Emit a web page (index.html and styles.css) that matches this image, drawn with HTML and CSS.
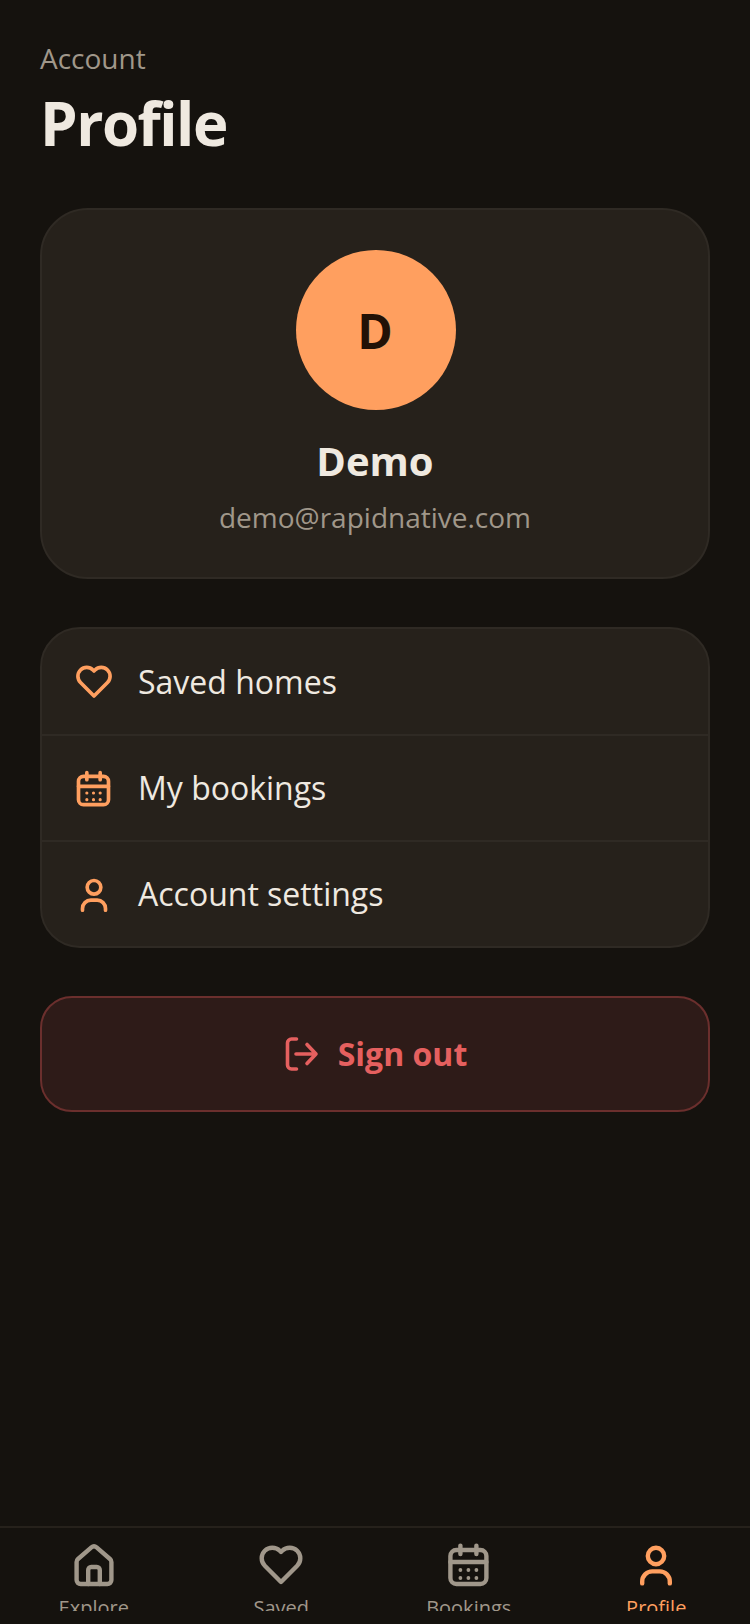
FILE: index.html
```html
<!DOCTYPE html>
<html lang="en">

<head>
    <meta charset="UTF-8">
    <meta name="viewport" content="width=device-width, initial-scale=1.0">
    <title>Profile</title>
    <link rel="stylesheet" href="styles.css">
</head>

<body>
<div class="screen">
    <main class="content">
        <p class="eyebrow">Account</p>
        <h1>Profile</h1>

        <!-- User card -->
        <section class="user-card">
            <div class="avatar">D</div>
            <div class="user-name">Demo</div>
            <div class="user-email">demo@rapidnative.com</div>
        </section>

        <!-- Menu -->
        <section class="menu">
            <div class="menu-row">
                <svg class="menu-icon" viewBox="0 0 24 24"><path d="M12 21 3.9 12.9a5.3 5.3 0 0 1 0-7.5 5.3 5.3 0 0 1 7.5 0l.6.6.6-.6a5.3 5.3 0 0 1 7.5 0 5.3 5.3 0 0 1 0 7.5z"/></svg>
                <span>Saved homes</span>
            </div>
            <div class="menu-row">
                <svg class="menu-icon" viewBox="0 0 24 24"><rect x="2.7" y="5" width="18" height="17" rx="3"/><path d="M7.7 2.8v4.2M15.7 2.8v4.2M2.7 11h18"/><path class="dots" d="M7.7 15h.01M11.7 15h.01M15.7 15h.01M7.7 19h.01M11.7 19h.01M15.7 19h.01"/></svg>
                <span>My bookings</span>
            </div>
            <div class="menu-row">
                <svg class="menu-icon" viewBox="0 0 24 24"><circle cx="12" cy="8" r="4.1"/><path d="M5.1 21.7v-1a5 5 0 0 1 5-5h3.8a5 5 0 0 1 5 5v1"/></svg>
                <span>Account settings</span>
            </div>
        </section>

        <div class="sign-out">
            <svg class="sign-out-icon" viewBox="0 0 36 36"><path d="M13.5 3h-5a4 4 0 0 0-4 4v22a4 4 0 0 0 4 4h5M13 18h20M24 8.5l9 9.5-9 9.5"/></svg>
            <span>Sign out</span>
        </div>
    </main>

    <!-- Bottom tabs -->
    <nav class="tabs">
        <div class="tab">
            <svg class="tab-icon" viewBox="0 0 24 24"><path d="M3.3 11a2 2 0 0 1 .7-1.5l6.7-5.8a2 2 0 0 1 2.6 0L20 9.5a2 2 0 0 1 .7 1.5v9a2 2 0 0 1-2 2H5.3a2 2 0 0 1-2-2z"/><path d="M9.1 22v-7a1.5 1.5 0 0 1 1.5-1.5h2.8a1.5 1.5 0 0 1 1.5 1.5v7"/></svg>
            <span>Explore</span>
        </div>
        <div class="tab">
            <svg class="tab-icon" viewBox="0 0 24 24"><path d="M12 21 3.9 12.9a5.3 5.3 0 0 1 0-7.5 5.3 5.3 0 0 1 7.5 0l.6.6.6-.6a5.3 5.3 0 0 1 7.5 0 5.3 5.3 0 0 1 0 7.5z"/></svg>
            <span>Saved</span>
        </div>
        <div class="tab">
            <svg class="tab-icon" viewBox="0 0 24 24"><rect x="2.7" y="5" width="18" height="17" rx="3"/><path d="M7.7 2.8v4.2M15.7 2.8v4.2M2.7 11h18"/><path class="dots" d="M7.7 15h.01M11.7 15h.01M15.7 15h.01M7.7 19h.01M11.7 19h.01M15.7 19h.01"/></svg>
            <span>Bookings</span>
        </div>
        <div class="tab tab-active">
            <svg class="tab-icon" viewBox="0 0 24 24"><circle cx="12" cy="8" r="4.1"/><path d="M5.1 21.7v-1a5 5 0 0 1 5-5h3.8a5 5 0 0 1 5 5v1"/></svg>
            <span>Profile</span>
        </div>
    </nav>
</div>
</body>

</html>
```

FILE: styles.css
```css
body {
    font-family: 'Open Sans', sans-serif;
    background-color: #15120e;
    margin: 0;
    padding: 0;
    color: #efe9e0;
}

svg {
    fill: none;
    stroke: currentColor;
    stroke-width: 2.2;
    stroke-linecap: round;
    stroke-linejoin: round;
    flex-shrink: 0;
}

.dots {
    stroke-width: 1.9;
}

.screen {
    height: 1624px;
    display: flex;
    flex-direction: column;
    overflow: hidden;
}

.content {
    flex: 1;
    padding: 38px 40px 0;
}

.eyebrow {
    margin: 0;
    font-size: 28px;
    line-height: 40px;
    color: #a0978a;
}

h1 {
    margin: 5px 0 0;
    font-size: 60px;
    line-height: 80px;
    font-weight: 700;
    letter-spacing: -1.5px;
}

.user-card {
    margin-top: 45px;
    height: 371px;
    box-sizing: border-box;
    padding-top: 40px;
    background-color: #26211b;
    border: 2px solid #2f2a24;
    border-radius: 48px;
    display: flex;
    flex-direction: column;
    align-items: center;
}

.avatar {
    width: 160px;
    height: 160px;
    box-sizing: border-box;
    padding-right: 2px;
    margin-left: 2px;
    border-radius: 50%;
    background-color: #ff9f5f;
    color: #221106;
    font-size: 48px;
    font-weight: 700;
    display: flex;
    align-items: center;
    justify-content: center;
}

.user-name {
    margin-top: 23px;
    font-size: 40px;
    line-height: 56px;
    font-weight: 700;
}

.user-email {
    margin-top: 8px;
    font-size: 28px;
    line-height: 40px;
    color: #a0978a;
}

.menu {
    margin-top: 48px;
    background-color: #26211b;
    border: 2px solid #2f2a24;
    border-radius: 40px;
}

.menu-row {
    height: 104.5px;
    padding: 0 32px;
    display: flex;
    align-items: center;
    gap: 24px;
    font-size: 32px;
    border-bottom: 2px solid #2f2a24;
}

.menu-row:last-child {
    height: 103.5px;
    border-bottom: 0;
}

.menu-icon {
    width: 40px;
    height: 40px;
    color: #ff9f5f;
}

.sign-out {
    margin-top: 48px;
    height: 116px;
    box-sizing: border-box;
    background-color: #2e1b18;
    border: 2px solid #6b2f2d;
    border-radius: 32px;
    color: #e5605f;
    font-size: 32px;
    font-weight: 700;
    display: flex;
    align-items: center;
    justify-content: center;
    gap: 19px;
}

.sign-out-icon {
    width: 36px;
    height: 36px;
    stroke-width: 3.6;
}

.tabs {
    height: 71px;
    overflow: hidden;
    border-top: 2px solid #26211b;
    margin-bottom: 13px;
    padding-top: 12px;
    display: flex;
}

.tab {
    flex: 1;
    display: flex;
    flex-direction: column;
    align-items: center;
    color: #a0978a;
    font-size: 20px;
    line-height: 28px;
}

.tab-active {
    color: #ff9f5f;
}

.tab-icon {
    width: 48px;
    height: 48px;
    margin-bottom: 6px;
}
```
